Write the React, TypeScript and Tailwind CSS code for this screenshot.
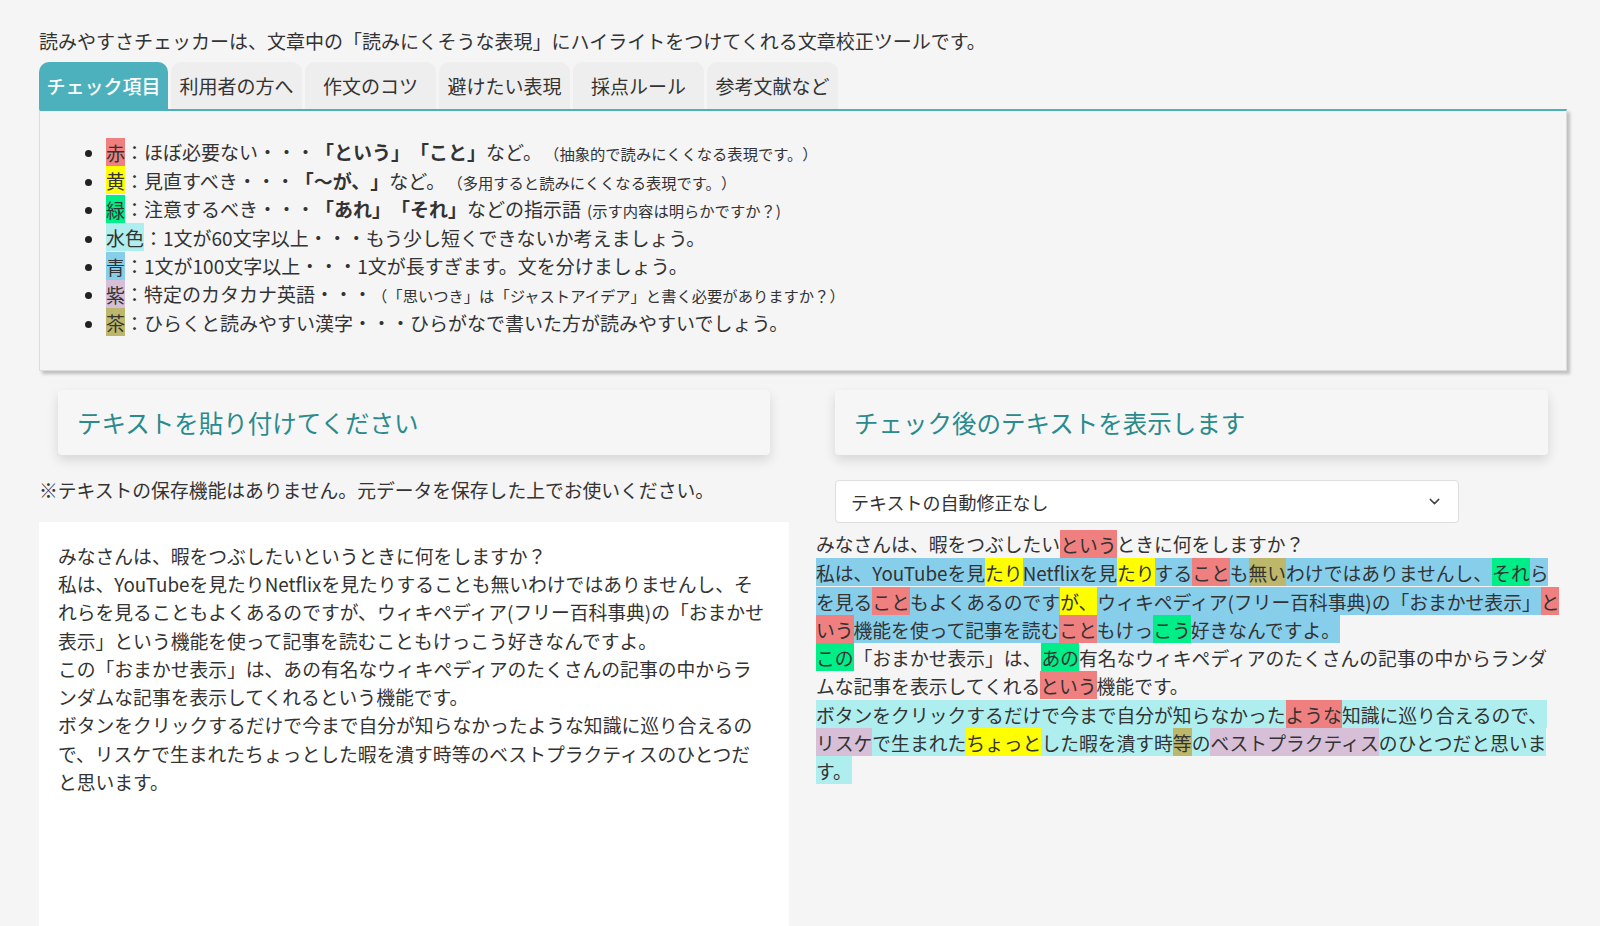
import { ChevronDown } from 'lucide-react';
import type { ReactNode } from 'react';

const tabs = ['チェック項目', '利用者の方へ', '作文のコツ', '避けたい表現', '採点ルール', '参考文献など'];

const sampleText =
  'みなさんは、暇をつぶしたいというときに何をしますか？\n私は、YouTubeを見たりNetflixを見たりすることも無いわけではありませんし、それらを見ることもよくあるのですが、ウィキペディア(フリー百科事典)の「おまかせ表示」という機能を使って記事を読むこともけっこう好きなんですよ。\nこの「おまかせ表示」は、あの有名なウィキペディアのたくさんの記事の中からランダムな記事を表示してくれるという機能です。\nボタンをクリックするだけで今まで自分が知らなかったような知識に巡り合えるので、リスケで生まれたちょっとした暇を潰す時等のベストプラクティスのひとつだと思います。';

// highlight helpers
const R = ({ children }: { children: ReactNode }) => <span className="bg-[#f08080] py-[0.5px]">{children}</span>;
const Y = ({ children }: { children: ReactNode }) => <span className="bg-[#ffff00] py-[0.5px]">{children}</span>;
const G = ({ children }: { children: ReactNode }) => <span className="bg-[#00ee88] py-[0.5px]">{children}</span>;
const P = ({ children }: { children: ReactNode }) => <span className="bg-[#d8bfd8] py-[0.5px]">{children}</span>;
const K = ({ children }: { children: ReactNode }) => <span className="bg-[#bdb76b] py-[0.5px]">{children}</span>;

function Legend() {
  return (
    <ul className="list-disc pl-[66px] marker:text-[#222]">
      <li>
        <span className="bg-[#f08080] py-[0.5px]">赤</span>：ほぼ必要ない・・・<b>「という」「こと」</b>など。
        <span className="ml-[2px] text-[15.3px] leading-none">（抽象的で読みにくくなる表現です。）</span>
      </li>
      <li>
        <span className="bg-[#ffff00] py-[0.5px]">黄</span>：見直すべき・・・<b>「〜が、」</b>など。
        <span className="ml-[2px] text-[15.3px] leading-none">（多用すると読みにくくなる表現です。）</span>
      </li>
      <li>
        <span className="bg-[#00ee88] py-[0.5px]">緑</span>：注意するべき・・・<b>「あれ」「それ」</b>などの指示語
        <span className="ml-[6px] text-[15.3px] leading-none">(示す内容は明らかですか？)</span>
      </li>
      <li>
        <span className="bg-[#afeeee] py-[0.5px]">水色</span>：1文が60文字以上・・・もう少し短くできないか考えましょう。
      </li>
      <li>
        <span className="bg-[#87ceeb] py-[0.5px]">青</span>：1文が100文字以上・・・1文が長すぎます。文を分けましょう。
      </li>
      <li>
        <span className="bg-[#d8bfd8] py-[0.5px]">紫</span>：特定のカタカナ英語・・・
        <span className="text-[15.3px] leading-none">（「思いつき」は「ジャストアイデア」と書く必要がありますか？）</span>
      </li>
      <li>
        <span className="bg-[#bdb76b] py-[0.5px]">茶</span>：ひらくと読みやすい漢字・・・ひらがなで書いた方が読みやすいでしょう。
      </li>
    </ul>
  );
}

function CardTitle({ children }: { children: ReactNode }) {
  return (
    <div className="mx-[19px] flex h-[65px] items-center rounded bg-[#f6f6f6] px-[19px] text-[24.5px] leading-none text-[#2a8a8c] shadow-[0_5px_12px_rgba(0,0,0,0.13)]">
      {children}
    </div>
  );
}

export default function App() {
  return (
    <div
      className="min-h-[926px] bg-[#f5f5f5] pt-[27px] text-[19px] leading-[28.4px] text-[#333] [text-spacing-trim:space-all]"
      style={{ fontFamily: '"Noto Sans CJK JP", "Noto Sans", sans-serif' }}
    >
      <div className="ml-[39px] w-[1528px]">
        <p>読みやすさチェッカーは、文章中の「読みにくそうな表現」にハイライトをつけてくれる文章校正ツールです。</p>

        <div className="mt-[7px] flex gap-[3px]">
          {tabs.map((t, i) => (
            <div
              key={t}
              className={
                i === 0
                  ? 'flex h-[47px] w-[129px] items-center justify-center rounded-t-[10px] bg-[#4cb1bc] font-medium text-white'
                  : 'flex h-[47px] w-[131px] items-center justify-center rounded-t-[10px] bg-[#eeeeee] text-[#333]'
              }
            >
              {t}
            </div>
          ))}
        </div>

        <div className="h-[262px] border border-[#dcdcdc] border-t-2 border-t-[#4cb1bc] bg-[#f5f5f5] pt-[27px] shadow-[3px_3px_3px_rgba(0,0,0,0.22)]">
          <Legend />
        </div>

        <div className="mt-[19px] grid grid-cols-[750px_751px] gap-[27px] text-[18.8px] leading-[28.3px]">
          <div>
            <CardTitle>テキストを貼り付けてください</CardTitle>
            <p className="mt-[21px]">※テキストの保存機能はありません。元データを保存した上でお使いください。</p>
            <textarea
              className="mt-[17px] block h-[420px] w-full resize-none bg-white pl-[19px] pr-[23px] pt-[20px] outline-none"
              defaultValue={sampleText}
            />
          </div>

          <div>
            <CardTitle>チェック後のテキストを表示します</CardTitle>
            <div className="mx-[19px] mt-[25px] flex h-[43px] w-[624px] items-center justify-between rounded border border-[#dedede] bg-white pl-[15px] pr-[15px] text-[18px]">
              <span>テキストの自動修正なし</span>
              <ChevronDown size={17} strokeWidth={2} className="text-[#444]" />
            </div>
            <div className="mt-[7px] w-[744px]">
              <div>
                みなさんは、暇をつぶしたい<R>という</R>ときに何をしますか？
              </div>
              <div>
                <span className="bg-[#87ceeb] py-[0.5px]">
                  私は、YouTubeを見<Y>たり</Y>Netflixを見<Y>たり</Y>する<R>こと</R>も<K>無い</K>わけではありませんし、<G>それ</G>らを見る<R>こと</R>もよくあるのです<Y>が、</Y>ウィキペディア(フリー百科事典)の「おまかせ表示」<R>という</R>機能を使って記事を読む<R>こと</R>もけっ<G>こう</G>好きなんですよ。
                </span>
              </div>
              <div>
                <G>この</G>「おまかせ表示」は、<G>あの</G>有名なウィキペディアのたくさんの記事の中からランダムな記事を表示してくれる<R>という</R>機能です。
              </div>
              <div>
                <span className="bg-[#afeeee] py-[0.5px]">
                  ボタンをクリックするだけで今まで自分が知らなかった<R>ような</R>知識に巡り合えるので、<P>リスケ</P>で生まれた<Y>ちょっと</Y>した暇を潰す時<K>等</K>の<P>ベストプラクティス</P>のひとつだと思います。
                </span>
              </div>
            </div>
          </div>
        </div>
      </div>
    </div>
  );
}
